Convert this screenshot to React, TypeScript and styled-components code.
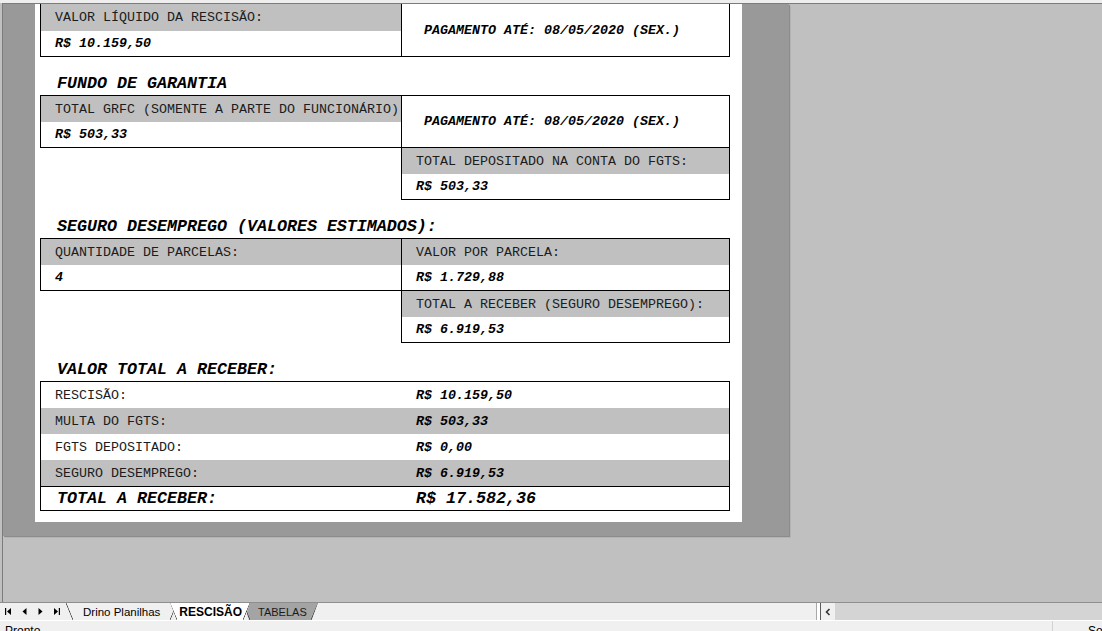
import React from 'react';
import styled, { createGlobalStyle } from 'styled-components';

const Global = createGlobalStyle`
  *, *::before, *::after { box-sizing: border-box; }
  html, body { margin: 0; padding: 0; }
  body {
    width: 1102px;
    height: 631px;
    overflow: hidden;
    background: #c0c0c0;
    font-family: "Liberation Sans", Arial, sans-serif;
  }
`;

const mono = `"Liberation Mono", "Courier New", monospace`;

const Window = styled.div`
  width: 1102px;
  height: 631px;
  display: flex;
  flex-direction: column;
  overflow: hidden;
`;

const TopStrip = styled.div`
  flex: none;
  height: 3px;
  background: #eeeeee;
`;

const SheetArea = styled.div`
  flex: 1;
  min-height: 0;
  margin-left: 2px;
  border-top: 1px solid #7c7c7c;
  border-left: 1px solid #7c7c7c;
  background: #c0c0c0;
  overflow: hidden;
`;

const Preview = styled.div`
  width: 786px;
  background: #999999;
  padding: 0 47px 14px 32px;
  box-shadow: 1px 1px 0 #8c8c8c, 2px 2px 0 #b4b4b4;
`;

const Page = styled.div`
  width: 707px;
  background: #ffffff;
  padding: 0 0 11px 5px;
`;

const Pair = styled.div`
  display: grid;
  grid-template-columns: 361px 329px;
  align-items: start;
`;

const Column = styled.div`
  display: flex;
  flex-direction: column;
`;

const Box = styled.div<{ $clipTop?: boolean; $joined?: boolean; $open?: boolean; $h?: number }>`
  display: flex;
  flex-direction: column;
  border: 1px solid #000;
  ${(p) => (p.$clipTop || p.$joined ? 'border-top: none;' : '')}
  ${(p) => (p.$open ? 'border-right: none;' : '')}
  ${(p) => (p.$h ? `height: ${p.$h}px;` : '')}
`;

const Label = styled.div<{ $h?: number }>`
  height: ${(p) => p.$h ?? 26}px;
  display: flex;
  align-items: center;
  padding-left: 14px;
  background: #c0c0c0;
  font-family: ${mono};
  font-size: 13.33px;
  color: #1c1c1c;
  white-space: nowrap;
`;

const Value = styled.div`
  height: 25px;
  display: flex;
  align-items: center;
  padding-left: 14px;
  font-family: ${mono};
  font-size: 13.33px;
  font-weight: bold;
  font-style: italic;
  color: #000;
  white-space: nowrap;
`;

const PayText = styled.div`
  flex: 1;
  display: flex;
  align-items: center;
  padding-left: 22px;
  font-family: ${mono};
  font-size: 13.33px;
  font-weight: bold;
  font-style: italic;
  color: #000;
  white-space: nowrap;
`;

const Heading = styled.div`
  height: 38px;
  display: flex;
  align-items: flex-end;
  padding: 0 0 2px 17px;
  font-family: ${mono};
  font-size: 16.67px;
  line-height: 18px;
  font-weight: bold;
  font-style: italic;
  color: #000;
  white-space: nowrap;
`;

const Summary = styled.div`
  width: 690px;
  border: 1px solid #000;
`;

const SumRow = styled.div<{ $shade: boolean }>`
  display: grid;
  grid-template-columns: 360px 1fr;
  align-items: center;
  height: 26px;
  background: ${(p) => (p.$shade ? '#c0c0c0' : '#ffffff')};
`;

const SumLabel = styled.span`
  padding-left: 14px;
  font-family: ${mono};
  font-size: 13.33px;
  color: #1c1c1c;
`;

const SumValue = styled.span`
  padding-left: 15px;
  font-family: ${mono};
  font-size: 13.33px;
  font-weight: bold;
  font-style: italic;
  color: #000;
`;

const TotalRow = styled.div`
  display: grid;
  grid-template-columns: 360px 1fr;
  align-items: center;
  height: 24px;
  border-top: 1px solid #000;
  font-family: ${mono};
  font-size: 16.67px;
  font-weight: bold;
  font-style: italic;
  color: #000;
`;

const TotalLabel = styled.span`
  padding-left: 16px;
`;

const TotalValue = styled.span`
  padding-left: 15px;
`;

/* ---------- bottom bars ---------- */

const TabBar = styled.div`
  flex: none;
  height: 18px;
  display: flex;
  background: #f0f0f0;
  border-top: 1px solid #8e8e8e;
`;

const NavGroup = styled.div`
  display: flex;
  width: 64px;
`;

const NavButton = styled.div`
  width: 16px;
  display: flex;
  align-items: center;
  justify-content: center;
`;

const Tab = styled.div<{ $variant: 'normal' | 'active' | 'gray' }>`
  position: relative;
  display: flex;
  align-items: center;
  height: 100%;
  color: #000;
  white-space: nowrap;
  ${(p) =>
    p.$variant === 'normal'
      ? `margin-left: 2px; padding: 0 17px 0 17px; font-size: 11.5px; z-index: 1;`
      : p.$variant === 'active'
      ? `margin-left: -7px; padding: 0 8px 0 9px; font-size: 12px; font-weight: bold; background: #ffffff; z-index: 3;
         clip-path: polygon(0 0, 100% 0, calc(100% - 6px) 100%, 6px 100%);`
      : `margin-left: -7px; padding: 0 11px 0 15px; font-size: 11px; background: #a4a4a4; color: #1a1a1a; z-index: 2;
         clip-path: polygon(0 0, 100% 0, calc(100% - 6px) 100%, 6px 100%);`}
  &::before,
  &::after {
    content: '';
    position: absolute;
    top: 0;
    bottom: 0;
    width: 7px;
  }
  &::before {
    left: 0;
    background: linear-gradient(to top right, transparent calc(50% - 0.7px), #444 50%, transparent calc(50% + 0.7px));
  }
  &::after {
    right: 0;
    background: linear-gradient(to bottom right, transparent calc(50% - 0.7px), #444 50%, transparent calc(50% + 0.7px));
  }
`;

const Spacer = styled.div`
  flex: 1;
`;

const Splitter = styled.div`
  width: 5px;
  background: #ffffff;
  border-left: 1px solid #a8a8a8;
  border-right: 1px solid #5a5a5a;
`;

const ScrollButton = styled.div`
  width: 14px;
  display: flex;
  align-items: center;
  justify-content: center;
  background: #f0f0f0;
`;

const ScrollTrack = styled.div`
  width: 267px;
  background: #d4d4d4;
`;

const StatusBar = styled.div`
  flex: none;
  height: 11px;
  display: flex;
  border-top: 1px solid #ffffff;
  background: #f0f0f0;
  overflow: hidden;
`;

const StatusText = styled.div`
  flex: 1;
  padding: 3px 0 0 5px;
  font-size: 12px;
  line-height: 14px;
  color: #000;
`;

const StatusCell = styled.div`
  width: 50px;
  padding: 3px 0 0 35px;
  border-left: 1px solid #d2d2d2;
  font-size: 12px;
  line-height: 14px;
  color: #000;
  white-space: nowrap;
  overflow: hidden;
`;

const First = () => (
  <svg width="7" height="9" viewBox="0 0 7 9">
    <rect x="0" y="1" width="1.2" height="7" fill="#000" />
    <polygon points="6,1 2,4.5 6,8" fill="#000" />
  </svg>
);
const Prev = () => (
  <svg width="5" height="9" viewBox="0 0 5 9">
    <polygon points="4.5,1 0.5,4.5 4.5,8" fill="#000" />
  </svg>
);
const Next = () => (
  <svg width="5" height="9" viewBox="0 0 5 9">
    <polygon points="0.5,1 4.5,4.5 0.5,8" fill="#000" />
  </svg>
);
const Last = () => (
  <svg width="7" height="9" viewBox="0 0 7 9">
    <polygon points="1,1 5,4.5 1,8" fill="#000" />
    <rect x="5.8" y="1" width="1.2" height="7" fill="#000" />
  </svg>
);
const Chevron = () => (
  <svg width="6" height="8" viewBox="0 0 6 8">
    <polyline points="4.5,1 1.5,4 4.5,7" fill="none" stroke="#333" strokeWidth="1.6" />
  </svg>
);

const summary = [
  { label: 'RESCISÃO:', value: 'R$ 10.159,50' },
  { label: 'MULTA DO FGTS:', value: 'R$ 503,33' },
  { label: 'FGTS DEPOSITADO:', value: 'R$ 0,00' },
  { label: 'SEGURO DESEMPREGO:', value: 'R$ 6.919,53' },
];

export default function App() {
  return (
    <Window>
      <Global />
      <TopStrip />
      <SheetArea>
        <Preview>
          <Page>
            <Pair>
              <Box $clipTop $open>
                <Label $h={27}>VALOR LÍQUIDO DA RESCISÃO:</Label>
                <Value>R$ 10.159,50</Value>
              </Box>
              <Box $clipTop $h={53}>
                <PayText>PAGAMENTO ATÉ: 08/05/2020 (SEX.)</PayText>
              </Box>
            </Pair>

            <Heading>FUNDO DE GARANTIA</Heading>
            <Pair>
              <Box $open>
                <Label>TOTAL GRFC (SOMENTE A PARTE DO FUNCIONÁRIO)</Label>
                <Value>R$ 503,33</Value>
              </Box>
              <Column>
                <Box $h={53}>
                  <PayText>PAGAMENTO ATÉ: 08/05/2020 (SEX.)</PayText>
                </Box>
                <Box $joined>
                  <Label>TOTAL DEPOSITADO NA CONTA DO FGTS:</Label>
                  <Value>R$ 503,33</Value>
                </Box>
              </Column>
            </Pair>

            <Heading>SEGURO DESEMPREGO (VALORES ESTIMADOS):</Heading>
            <Pair>
              <Box $open>
                <Label>QUANTIDADE DE PARCELAS:</Label>
                <Value>4</Value>
              </Box>
              <Column>
                <Box>
                  <Label>VALOR POR PARCELA:</Label>
                  <Value>R$ 1.729,88</Value>
                </Box>
                <Box $joined>
                  <Label>TOTAL A RECEBER (SEGURO DESEMPREGO):</Label>
                  <Value>R$ 6.919,53</Value>
                </Box>
              </Column>
            </Pair>

            <Heading>VALOR TOTAL A RECEBER:</Heading>
            <Summary>
              {summary.map((r, i) => (
                <SumRow key={r.label} $shade={i % 2 === 1}>
                  <SumLabel>{r.label}</SumLabel>
                  <SumValue>{r.value}</SumValue>
                </SumRow>
              ))}
              <TotalRow>
                <TotalLabel>TOTAL A RECEBER:</TotalLabel>
                <TotalValue>R$ 17.582,36</TotalValue>
              </TotalRow>
            </Summary>
          </Page>
        </Preview>
      </SheetArea>

      <TabBar>
        <NavGroup>
          <NavButton><First /></NavButton>
          <NavButton><Prev /></NavButton>
          <NavButton><Next /></NavButton>
          <NavButton><Last /></NavButton>
        </NavGroup>
        <Tab $variant="normal">Drino Planilhas</Tab>
        <Tab $variant="active">RESCISÃO</Tab>
        <Tab $variant="gray">TABELAS</Tab>
        <Spacer />
        <Splitter />
        <ScrollButton><Chevron /></ScrollButton>
        <ScrollTrack />
      </TabBar>
      <StatusBar>
        <StatusText>Pronto</StatusText>
        <StatusCell>Soma</StatusCell>
      </StatusBar>
    </Window>
  );
}
